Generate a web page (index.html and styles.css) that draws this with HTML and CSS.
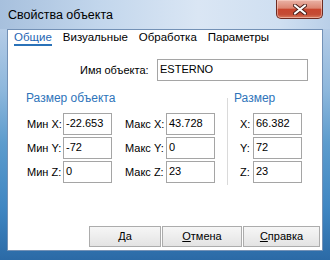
FILE: index.html
```html
<!DOCTYPE html>
<html lang="ru">
<head>
<meta charset="utf-8">
<title>Свойства объекта</title>
<link rel="stylesheet" href="styles.css">
</head>
<body>
<div class="window">
  <div class="titlebar">
    <span class="title">Свойства объекта</span>
    <div class="close">
      <svg width="14" height="11" viewBox="0 0 14 11">
        <path d="M2 1.5 L12 9.5 M12 1.5 L2 9.5" stroke="#4a1f1a" stroke-width="4" stroke-linecap="round"/>
        <path d="M2 1.5 L12 9.5 M12 1.5 L2 9.5" stroke="#ffffff" stroke-width="2.2" stroke-linecap="round"/>
      </svg>
    </div>
  </div>
  <div class="client">
    <div class="tabs">
      <span class="tab active">Общие</span>
      <span class="tab">Визуальные</span>
      <span class="tab">Обработка</span>
      <span class="tab">Параметры</span>
    </div>
    <div class="name-row">
      <span class="name-label">Имя объекта:</span>
      <div class="field name-field">ESTERNO</div>
    </div>
    <div class="groups">
      <div class="group">
        <div class="heading">Размер объекта</div>
        <div class="grid-left">
          <span class="lab l1">Мин X:</span><div class="field">-22.653</div>
          <span class="lab l2">Макс X:</span><div class="field">43.728</div>
          <span class="lab l1">Мин Y:</span><div class="field">-72</div>
          <span class="lab l2">Макс Y:</span><div class="field">0</div>
          <span class="lab l1">Мин Z:</span><div class="field">0</div>
          <span class="lab l2">Макс Z:</span><div class="field">23</div>
        </div>
      </div>
      <div class="sep"></div>
      <div class="group right">
        <div class="heading">Размер</div>
        <div class="grid-right">
          <span class="lab l3">X:</span><div class="field">66.382</div>
          <span class="lab l3">Y:</span><div class="field">72</div>
          <span class="lab l3">Z:</span><div class="field">23</div>
        </div>
      </div>
    </div>
    <div class="buttons">
      <div class="btn b1">Да</div>
      <div class="btn b2"><u>О</u>тмена</div>
      <div class="btn b3"><u>С</u>правка</div>
    </div>
  </div>
</div>
</body>
</html>
```

FILE: styles.css
```css
html, body {
  margin: 0;
  padding: 0;
}
body {
  width: 330px;
  height: 260px;
  overflow: hidden;
  font-family: "Liberation Sans", sans-serif;
  font-size: 11px;
  color: #000;
}
.window {
  width: 330px;
  height: 260px;
  box-sizing: border-box;
  display: flex;
  flex-direction: column;
  background: linear-gradient(180deg, #bcd1ea 0%, #b3cbe6 12%, #8db7dc 35%, #5d9ccd 55%, #3f86c2 80%, #2b6aa6 100%);
}
.titlebar {
  height: 29px;
  flex: none;
  display: flex;
  align-items: flex-start;
  padding: 0 7px 0 8px;
  background: linear-gradient(90deg, #a7c0dd 0%, #c2d6ec 30%, #dae6f4 60%, #cfdff1 85%, #b9cfe8 100%);
}
.title {
  font-size: 12.5px;
  line-height: 15px;
  margin-top: 8px;
  color: #000;
  flex: 1;
}
.close {
  width: 45px;
  height: 18px;
  border: 1px solid #6d2b22;
  border-top: none;
  border-radius: 0 0 5px 5px;
  background: linear-gradient(180deg, #eab2a6 0%, #dc8672 45%, #c8462f 52%, #c44c35 80%, #d77b5e 100%);
  display: flex;
  align-items: center;
  justify-content: center;
  box-shadow: inset 0 0 0 1px rgba(255,220,210,0.5);
}
.client {
  flex: 1;
  margin: 0 7px 9px 7px;
  border: 1px solid #7391b6;
  background: #fff;
  display: flex;
  flex-direction: column;
}
.tabs {
  display: flex;
  gap: 11px;
  padding-left: 6px;
}
.tab {
  font-size: 11.5px;
  line-height: 14px;
  border-bottom: 2px solid transparent;
  color: #000;
}
.tab.active {
  color: #1f66b3;
  border-bottom-color: #2a72b8;
}
.name-row {
  display: flex;
  align-items: center;
  margin-top: 13px;
  padding-left: 72px;
}
.name-label {
  width: 68px;
  text-align: right;
  margin-right: 9px;
  white-space: nowrap;
}
.field {
  box-sizing: border-box;
  width: 49px;
  height: 22px;
  border: 1px solid #a5a5a5;
  padding: 3px 1px 0 2px;
  line-height: 13px;
  background: #fff;
}
.name-field {
  width: 151px;
}
.groups {
  display: flex;
  margin-top: 9px;
  padding-left: 18px;
}
.heading {
  font-size: 12px;
  line-height: 16px;
  color: #2e74ba;
}
.grid-left {
  display: grid;
  grid-template-columns: 37px 49px 54px 49px;
  grid-auto-rows: 22px;
  row-gap: 2px;
  margin-top: 7px;
  align-items: center;
}
.grid-right {
  display: grid;
  grid-template-columns: 19px 49px;
  grid-auto-rows: 22px;
  row-gap: 2px;
  margin-top: 7px;
  align-items: center;
}
.lab {
  white-space: nowrap;
}
.l1 { padding-left: 1px; }
.l2 { padding-left: 13px; }
.l3 { padding-left: 6px; }
.sep {
  width: 1px;
  height: 87px;
  margin: 8px 0 0 12px;
  background: #dadada;
}
.group.right {
  padding-left: 6px;
}
.buttons {
  margin-top: auto;
  display: flex;
  justify-content: flex-end;
  gap: 1px;
  padding: 0 2px 3px 0;
}
.btn {
  box-sizing: border-box;
  height: 21px;
  border: 1px solid #acacac;
  background: linear-gradient(180deg, #f6f6f6 0%, #ededed 50%, #e3e3e3 100%);
  text-align: center;
  line-height: 19px;
}
.b1 { width: 72px; }
.b2 { width: 80px; }
.b3 { width: 77px; }
```
